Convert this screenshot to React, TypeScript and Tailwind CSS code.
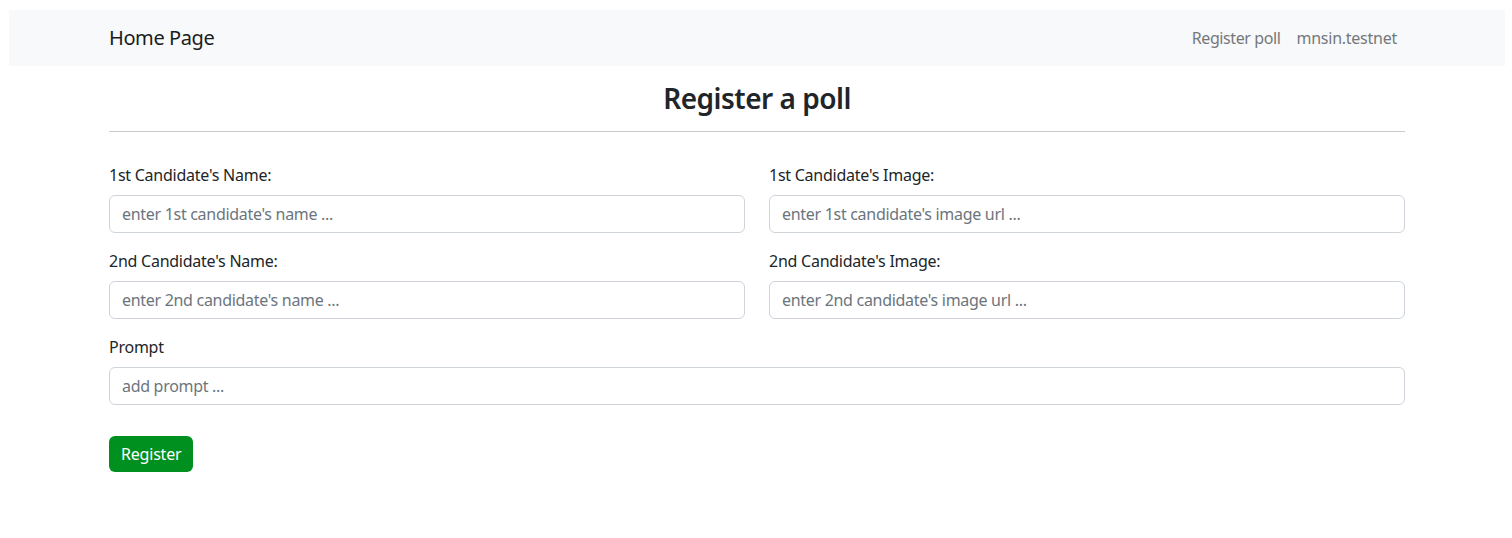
import React from "react";

const font = { fontFamily: '"Noto Sans", "Open Sans", sans-serif' };

function Field({ label, placeholder }: { label: string; placeholder: string }) {
  return (
    <div className="flex flex-col">
      <label className="text-[16px] leading-[24px] tracking-[-0.25px] text-[#212529] mb-2">{label}</label>
      <input
        className="h-[38px] w-full rounded-[6px] border border-[#ced4da] bg-white px-3 text-[16px] tracking-[-0.3px] text-[#212529] placeholder:text-[#6c757d] outline-none"
        placeholder={placeholder}
      />
    </div>
  );
}

export default function App() {
  return (
    <div className="min-h-[538px] bg-white pl-[9px] pr-[7px] pt-[10px]" style={font}>
      <nav className="h-[56px] bg-[#f8f9fa] flex items-center">
        <div className="w-[1296px] mx-auto flex items-center justify-between">
          <a className="text-[20px] leading-[30px] tracking-[-0.4px] text-[#1a1d20]">Home Page</a>
          <div className="flex items-center">
            <a className="px-2 text-[16px] leading-[24px] tracking-[-0.4px] text-[#75787b]">Register poll</a>
            <a className="px-2 text-[16px] leading-[24px] tracking-[-0.25px] text-[#75787b]">mnsin.testnet</a>
          </div>
        </div>
      </nav>
      <main className="w-[1296px] mx-auto">
        <h3 className="mt-[15px] text-center text-[28px] leading-[34px] font-semibold tracking-[-0.5px] text-[#212529]">
          Register a poll
        </h3>
        <div className="mt-[16px] h-px bg-[#c9cacb]" />
        <div className="mt-[31px] grid grid-cols-2 gap-x-6 gap-y-4">
          <Field label="1st Candidate's Name:" placeholder="enter 1st candidate's name ..." />
          <Field label="1st Candidate's Image:" placeholder="enter 1st candidate's image url ..." />
          <Field label="2nd Candidate's Name:" placeholder="enter 2nd candidate's name ..." />
          <Field label="2nd Candidate's Image:" placeholder="enter 2nd candidate's image url ..." />
          <div className="col-span-2">
            <Field label="Prompt" placeholder="add prompt ..." />
          </div>
        </div>
        <button className="mt-[31px] h-[36px] rounded-[6px] bg-[#009020] px-3 text-[16px] tracking-[-0.2px] text-white">
          Register
        </button>
      </main>
    </div>
  );
}
